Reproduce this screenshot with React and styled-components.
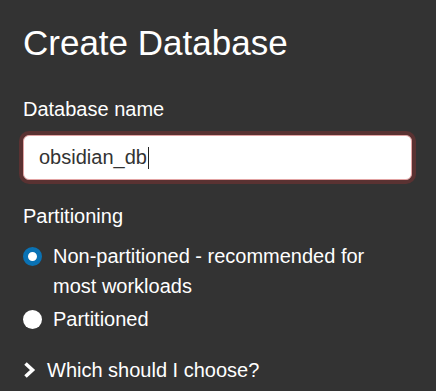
import React from "react";
import styled, { createGlobalStyle } from "styled-components";

const Global = createGlobalStyle`
  html, body { margin: 0; padding: 0; background: #333333; }
  body { font-family: "Liberation Sans", Arial, sans-serif; color: #ffffff; }
`;

const Page = styled.div`
  box-sizing: border-box;
  width: 436px;
  min-height: 391px;
  padding: 23px 23px 0 23px;
  background: #333333;
`;

const Title = styled.h1`
  margin: 0;
  font-size: 35px;
  font-weight: 400;
  line-height: 40px;
  color: #ffffff;
`;

const Label = styled.div`
  margin-top: ${(p) => p.$top}px;
  font-size: 20px;
  line-height: 24px;
  color: #ffffff;
`;

const Field = styled.div`
  box-sizing: border-box;
  margin-top: 14px;
  width: 389px;
  height: 45px;
  display: flex;
  align-items: center;
  padding: 0 15px;
  background: #ffffff;
  border: 1px solid #e2a3a3;
  border-radius: 6px;
  box-shadow: 0 0 0 4px #5a3232;
  font-size: 20px;
  color: #333333;
`;

const Caret = styled.span`
  display: inline-block;
  width: 1px;
  height: 22px;
  margin-left: 1px;
  background: #222222;
`;

const Options = styled.div`
  margin-top: 13px;
  display: flex;
  flex-direction: column;
  gap: 3px;
`;

const Option = styled.label`
  display: flex;
  align-items: flex-start;
  gap: 11px;
  font-size: 20px;
  line-height: 30px;
  color: #ffffff;
`;

const Radio = styled.span`
  box-sizing: border-box;
  flex: none;
  width: 19px;
  height: 19px;
  margin-top: 5.5px;
  border-radius: 50%;
  background: #ffffff;
  border: ${(p) => (p.$checked ? "5.5px solid #0a72b4" : "none")};
`;

const Disclosure = styled.div`
  margin-top: 24px;
  display: flex;
  align-items: center;
  gap: 11px;
  font-size: 20px;
  line-height: 24px;
  color: #ffffff;
`;

const Chevron = () => (
  <svg width="13" height="18" viewBox="0 0 13 18" aria-hidden="true">
    <polyline
      points="2.5,2.5 9.5,9 2.5,15.5"
      fill="none"
      stroke="#ffffff"
      strokeWidth="3.6"
      strokeLinecap="butt"
      strokeLinejoin="miter"
    />
  </svg>
);

export default function App() {
  return (
    <Page>
      <Global />
      <Title>Create Database</Title>
      <Label $top={34}>Database name</Label>
      <Field>
        obsidian_db
        <Caret />
      </Field>
      <Label $top={24}>Partitioning</Label>
      <Options>
        <Option>
          <Radio $checked />
          <span>Non-partitioned - recommended for most workloads</span>
        </Option>
        <Option>
          <Radio />
          <span>Partitioned</span>
        </Option>
      </Options>
      <Disclosure>
        <Chevron />
        <span>Which should I choose?</span>
      </Disclosure>
    </Page>
  );
}
